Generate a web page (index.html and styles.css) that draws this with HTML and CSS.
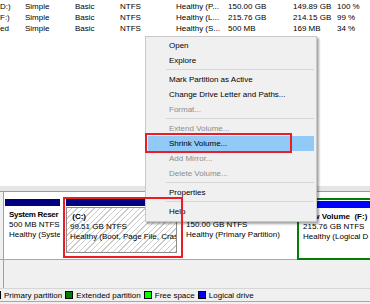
FILE: index.html
```html
<!DOCTYPE html>
<html lang="en">
<head>
    <meta charset="UTF-8">
    <title>Disk Management</title>
    <link rel="stylesheet" href="styles.css">
</head>
<body>

<div class="screen">
    <div class="volume-list">
        <div class="row"><span>D:)</span><span>Simple</span><span>Basic</span><span>NTFS</span><span>Healthy (P...</span><span>150.00 GB</span><span>149.89 GB</span><span>100 %</span></div>
        <div class="row"><span>F:)</span><span>Simple</span><span>Basic</span><span>NTFS</span><span>Healthy (L...</span><span>215.76 GB</span><span>214.15 GB</span><span>99 %</span></div>
        <div class="row"><span>ed</span><span>Simple</span><span>Basic</span><span>NTFS</span><span>Healthy (S...</span><span>500 MB</span><span>169 MB</span><span>34 %</span></div>
    </div>

    <div class="splitter"></div>

    <div class="disk-pane">
        <div class="disk-edge"></div>
        <div class="partitions">
            <div class="part part-sysres">
                <div class="bar"></div>
                <div class="info">
                    <b>System Reser</b>
                    <span>500 MB NTFS</span>
                    <span>Healthy (Syste</span>
                </div>
            </div>
            <div class="part part-c">
                <div class="bar"></div>
                <div class="info selected">
                    <b>&nbsp;(C:)</b>
                    <span>99.51 GB NTFS</span>
                    <span>Healthy (Boot, Page File, Cras</span>
                </div>
            </div>
            <div class="part part-d">
                <div class="bar"></div>
                <div class="info">
                    <b>New Volume (D:)</b>
                    <span>150.00 GB NTFS</span>
                    <span>Healthy (Primary Partition)</span>
                </div>
            </div>
            <div class="extended">
                <div class="bar logical"></div>
                <div class="info">
                    <b>New Volume&nbsp; (F:)</b>
                    <span>215.76 GB NTFS</span>
                    <span>Healthy (Logical D</span>
                </div>
            </div>
        </div>
    </div>

    <div class="empty-pane"><div class="disk-edge"></div></div>

    <div class="legend">
        <span class="swatch primary"></span><span class="legend-text">Primary partition</span>
        <span class="swatch ext"></span><span class="legend-text">Extended partition</span>
        <span class="swatch free"></span><span class="legend-text">Free space</span>
        <span class="swatch logical"></span><span class="legend-text">Logical drive</span>
    </div>
    <div class="footer"></div>

    <!-- context menu opened on (C:) -->
    <div class="menu">
        <div class="item">Open</div>
        <div class="item">Explore</div>
        <div class="sep"></div>
        <div class="item">Mark Partition as Active</div>
        <div class="item">Change Drive Letter and Paths...</div>
        <div class="item disabled">Format...</div>
        <div class="sep"></div>
        <div class="item disabled">Extend Volume...</div>
        <div class="item hover">Shrink Volume...</div>
        <div class="item disabled">Add Mirror...</div>
        <div class="item disabled">Delete Volume...</div>
        <div class="sep"></div>
        <div class="item">Properties</div>
        <div class="sep"></div>
        <div class="item">Help</div>
    </div>

    <div class="mark mark-shrink"></div>
    <div class="mark mark-c"></div>
</div>

</body>
</html>
```

FILE: styles.css
```css
body {
    margin: 0;
    background: #fff;
    font-family: "Liberation Sans", Arial, sans-serif;
    font-size: 8px;
    color: #000;
}
.screen {
    width: 370px;
    height: 304px;
    position: relative;
    overflow: hidden;
}

.volume-list {
    height: 186px;
    padding-top: 1px;
    box-sizing: border-box;
    background: #fff;
}
.volume-list .row {
    display: grid;
    grid-template-columns: 25px 50px 45px 56px 52px 65px 44px auto;
    height: 11px;
    line-height: 11px;
    white-space: nowrap;
}

.splitter {
    height: 5px;
    background: #e6e6e6;
    border-bottom: 1px solid #9c9c9c;
}

.disk-pane {
    display: flex;
    height: 67px;
    background: #fff;
    border-bottom: 1px solid #a8a8a8;
}
.disk-edge {
    width: 3px;
    flex: none;
    background: #f0f0f0;
    border-right: 1px solid #a0a0a0;
}
.partitions {
    display: flex;
    align-items: flex-start;
    padding-top: 7px;
    margin-left: 1px;
    white-space: nowrap;
}
.part {
    flex: none;
    overflow: hidden;
    height: 54px;
    display: flex;
    flex-direction: column;
}
.part-sysres { width: 55px; }
.part-c { width: 111px; margin-left: 6px; }
.part-d { width: 112px; margin-left: 5px; }
.bar {
    height: 7px;
    flex: none;
    background: #000080;
}
.bar.logical { background: #0000ff; }
.info {
    flex: 1;
    display: flex;
    flex-direction: column;
    padding: 4px 0 0 4px;
    line-height: 10px;
    overflow: hidden;
}
.part-sysres .info b { letter-spacing: -0.3px; }
.info.selected {
    margin-top: 1px;
    padding-left: 3px;
    border: 1px solid #8a8a8a;
    background: repeating-linear-gradient(135deg, #fff 0 3px, #cccccc 3px 4px);
}
.extended {
    flex: none;
    width: 80px;
    height: 56px;
    margin: -1px 0 0 3px;
    padding: 1px;
    border: 2px solid #008000;
    display: flex;
    flex-direction: column;
}
.extended .info { padding-left: 3px; }

.empty-pane {
    height: 28px;
    background: #f0f0f0;
    border-bottom: 1px solid #d6d6d6;
    display: flex;
}

.legend {
    display: flex;
    align-items: center;
    height: 12px;
    margin-left: -7px;
    background: #f0f0f0;
    border-bottom: 1px solid #a8a8a8;
    white-space: nowrap;
}
.swatch {
    width: 6px;
    height: 6px;
    border: 1px solid #000;
    margin-right: 3px;
}
.swatch.primary { background: #000080; }
.swatch.ext { background: #008000; }
.swatch.free { background: #00ff00; }
.swatch.logical { background: #0000ff; }
.legend-text { margin-right: 3px; }
.footer {
    height: 3px;
    background: #f0f0f0;
}

.menu {
    position: absolute;
    left: 145px;
    top: 36px;
    width: 168px;
    padding: 1px 2px 2px 0;
    background: #f0f0f0;
    border: 1px solid #c8c8c8;
    box-shadow: 2px 2px 2px rgba(0, 0, 0, 0.35);
}
.menu .item {
    height: 15px;
    line-height: 15px;
    padding-left: 21px;
    margin-left: 2px;
    white-space: nowrap;
}
.menu .item.disabled { color: #8c8c8c; }
.menu .item.hover { background: #91c9f7; }
.menu .sep {
    height: 1px;
    margin: 1px 0 2px 20px;
    background: #d7d7d7;
}

.mark {
    position: absolute;
    border: 2px solid #ed1c24;
}
.mark-shrink {
    left: 145px;
    top: 133px;
    width: 143px;
    height: 16px;
}
.mark-c {
    left: 63px;
    top: 197px;
    width: 116px;
    height: 57px;
}
```
